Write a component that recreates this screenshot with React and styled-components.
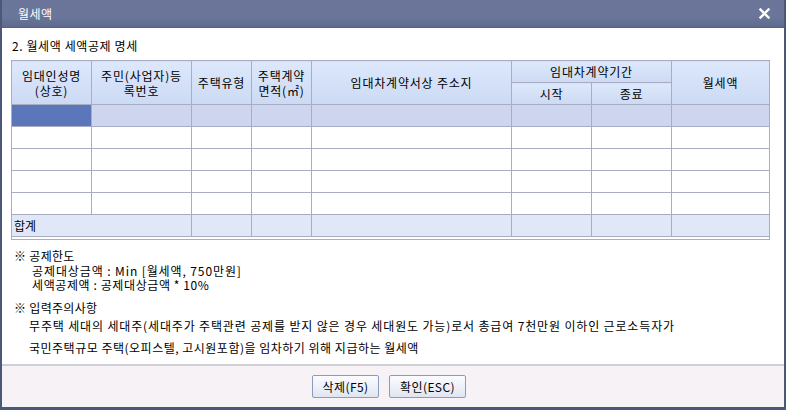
import React from 'react';
import styled, { createGlobalStyle } from 'styled-components';

const GlobalStyle = createGlobalStyle`
  html, body {
    margin: 0;
    padding: 0;
    background: #4b5878;
  }
  body {
    font-family: 'Noto Sans CJK KR', 'Noto Sans', sans-serif;
    font-size: 12px;
    color: #000;
  }
`;

const Window = styled.div`
  width: 786px;
  height: 410px;
  box-sizing: border-box;
  border: 2px solid #4b5878;
  border-top: 0;
  border-bottom-width: 3px;
  background: #fff;
  display: flex;
  flex-direction: column;
`;

const TitleBar = styled.div`
  height: 28px;
  flex: none;
  background: linear-gradient(#6a7599, #6b769b 60%, #5f6a8f);
  display: flex;
  align-items: center;
  justify-content: space-between;
  padding: 0 14px 0 16px;
  color: #fff;
  font-size: 12px;
  letter-spacing: 0.5px;
  border-bottom: 1px solid #56618a;
  box-sizing: border-box;
`;

const CloseButton = styled.button`
  background: none;
  border: none;
  padding: 0;
  display: flex;
  cursor: pointer;
`;

const Content = styled.div`
  flex: 1;
  padding: 11px 14px 0 9px;
`;

const SectionTitle = styled.div`
  line-height: 14px;
  padding-left: 1px;
  margin-bottom: 7px;
  letter-spacing: 0.6px;
`;

const GridBox = styled.div`
  border: 1px solid #a9adc4;
  height: 180px;
  box-sizing: border-box;
  background: #fff;
`;

const Grid = styled.table`
  border-collapse: collapse;
  table-layout: fixed;
  width: 758px;
  margin: -1px 0 0 -1px;
`;

const Th = styled.th`
  font-weight: normal;
  border: 1px solid #a9adc4;
  background: linear-gradient(#dde8fb, #cbdaf4);
  height: ${(p) => (p.$tall ? 42 : 21)}px;
  padding: 0;
  line-height: 15px;
  letter-spacing: 0.8px;
  text-align: center;
  vertical-align: middle;
`;

const Td = styled.td`
  border: 1px solid #a9adc4;
  height: 21px;
  padding: 0 2px;
  background: ${(p) => p.$bg || '#fff'};
`;

const Notes = styled.div`
  margin-top: 9px;
  padding-left: 3px;
  line-height: 14.5px;
  letter-spacing: 0.3px;
`;

const NoteHead = styled.div`
  margin-top: ${(p) => p.$gap || 0}px;
`;

const NoteLine = styled.div`
  padding-left: ${(p) => p.$indent}px;
  line-height: ${(p) => p.$lh || 14.5}px;
  letter-spacing: ${(p) => p.$ls || 0.5}px;
`;

const Footer = styled.div`
  height: 41px;
  flex: none;
  background: #f7f2f6;
  border-top: 2px solid #cfcfd6;
  display: flex;
  justify-content: center;
  align-items: center;
  gap: 10px;
  padding-right: 8px;
`;

const Button = styled.button`
  height: 23px;
  width: ${(p) => p.$w}px;
  padding: 0;
  font-family: inherit;
  font-size: 12px;
  letter-spacing: 0.4px;
  color: #000;
  background: linear-gradient(#fbfcff, #dfe5f1);
  border: 1px solid #8c9bbd;
  border-radius: 2px;
  cursor: pointer;
`;

const widths = [80, 100, 60, 60, 200, 80, 80, 98];

const App = () => {
  const emptyRows = [0, 1, 2, 3];
  return (
    <>
      <GlobalStyle />
      <Window>
        <TitleBar>
          <span>월세액</span>
          <CloseButton aria-label="닫기">
            <svg width="11" height="11" viewBox="0 0 11 11">
              <path d="M1.5 1.5 L9.5 9.5 M9.5 1.5 L1.5 9.5" stroke="#fff" strokeWidth="2.4" strokeLinecap="square" />
            </svg>
          </CloseButton>
        </TitleBar>
        <Content>
          <SectionTitle>2. 월세액 세액공제 명세</SectionTitle>
          <GridBox>
            <Grid>
              <colgroup>
                {widths.map((w, i) => (
                  <col key={i} style={{ width: w }} />
                ))}
              </colgroup>
              <thead>
                <tr>
                  <Th rowSpan={2} $tall>임대인성명<br />(상호)</Th>
                  <Th rowSpan={2} $tall>주민(사업자)등<br />록번호</Th>
                  <Th rowSpan={2} $tall>주택유형</Th>
                  <Th rowSpan={2} $tall>주택계약<br />면적(㎡)</Th>
                  <Th rowSpan={2} $tall>임대차계약서상 주소지</Th>
                  <Th colSpan={2}>임대차계약기간</Th>
                  <Th rowSpan={2} $tall>월세액</Th>
                </tr>
                <tr>
                  <Th>시작</Th>
                  <Th>종료</Th>
                </tr>
              </thead>
              <tbody>
                <tr>
                  <Td $bg="#5b77b9" />
                  {widths.slice(1).map((_, i) => (
                    <Td key={i} $bg="#cdd6ee" />
                  ))}
                </tr>
                {emptyRows.map((r) => (
                  <tr key={r}>
                    {widths.map((_, i) => (
                      <Td key={i} />
                    ))}
                  </tr>
                ))}
                <tr>
                  <Td colSpan={2} $bg="#e0e8f8">합계</Td>
                  {widths.slice(2).map((_, i) => (
                    <Td key={i} $bg="#e0e8f8" />
                  ))}
                </tr>
              </tbody>
            </Grid>
          </GridBox>
          <Notes>
            <NoteHead>※ 공제한도</NoteHead>
            <NoteLine $indent={18} $ls={0.9}>공제대상금액 : Min [월세액, 750만원]</NoteLine>
            <NoteLine $indent={18} $ls={0.6}>세액공제액 : 공제대상금액 * 10%</NoteLine>
            <NoteHead $gap={8}>※ 입력주의사항</NoteHead>
            <NoteLine $indent={15} $lh={22} $ls={0.85}>
              무주택 세대의 세대주(세대주가 주택관련 공제를 받지 않은 경우 세대원도 가능)로서 총급여 7천만원 이하인 근로소득자가
            </NoteLine>
            <NoteLine $indent={15} $lh={22} $ls={0.5}>
              국민주택규모 주택(오피스텔, 고시원포함)을 임차하기 위해 지급하는 월세액
            </NoteLine>
          </Notes>
        </Content>
        <Footer>
          <Button $w={67}>삭제(F5)</Button>
          <Button $w={77}>확인(ESC)</Button>
        </Footer>
      </Window>
    </>
  );
};

export default App;
